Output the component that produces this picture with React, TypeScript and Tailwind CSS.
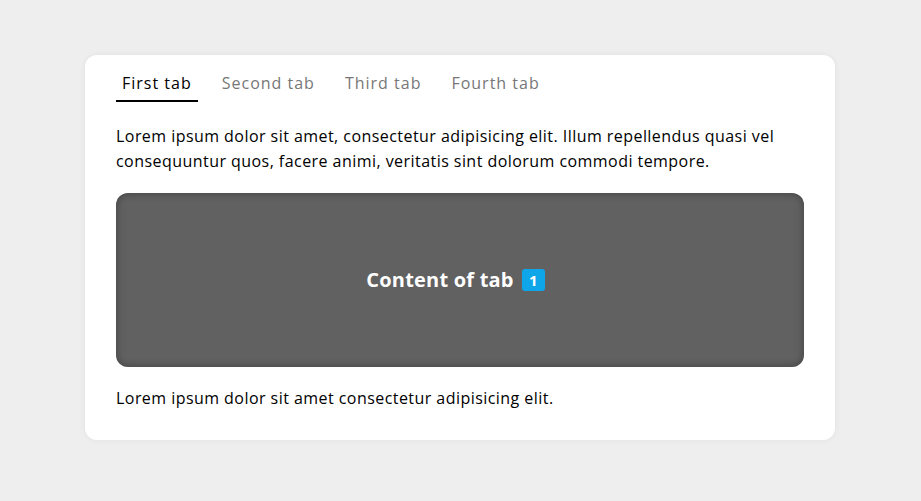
import React, { useState } from "react";

const tabs = ["First tab", "Second tab", "Third tab", "Fourth tab"];

export default function App() {
  const [active, setActive] = useState(0);
  return (
    <div
      className="min-h-[501px] w-full bg-[#eeeeee] pt-[55px] pl-[85px]"
      style={{ fontFamily: '"Open Sans", sans-serif' }}
    >
      <div className="w-[750px] h-[385px] bg-white rounded-[12px] shadow-[0_0_6px_rgba(0,0,0,0.06)] px-[31px] pt-[16px]">
        <div className="flex gap-[18px]">
          {tabs.map((t, i) => (
            <button
              key={t}
              onClick={() => setActive(i)}
              className={
                "px-[6px] pb-[5px] text-[16px] leading-[24px] tracking-[1px] border-b-2 " +
                (i === active
                  ? "text-black border-black"
                  : "text-[#777777] border-transparent")
              }
            >
              {t}
            </button>
          ))}
        </div>
        <p className="mt-[22px] text-[16px] leading-[25px] tracking-[0.45px] text-black">
          Lorem ipsum dolor sit amet, consectetur adipisicing elit. Illum
          repellendus quasi vel consequuntur quos, facere animi, veritatis sint
          dolorum commodi tempore.
        </p>
        <div className="mt-[19px] h-[174px] rounded-[12px] bg-[#616161] shadow-[inset_0_0_8px_rgba(0,0,0,0.35)] flex items-center justify-center gap-[8px] pr-[9px]">
          <span className="text-white font-bold text-[20px] leading-[24px] tracking-[0.2px]">
            Content of tab
          </span>
          <span className="bg-[#0ea5e9] text-white font-bold text-[15px] leading-[22px] w-[23px] h-[22px] rounded-[3px] flex items-center justify-center">
            {active + 1}
          </span>
        </div>
        <p className="mt-[19px] text-[16px] leading-[25px] tracking-[0.45px] text-black">
          Lorem ipsum dolor sit amet consectetur adipisicing elit.
        </p>
      </div>
    </div>
  );
}
